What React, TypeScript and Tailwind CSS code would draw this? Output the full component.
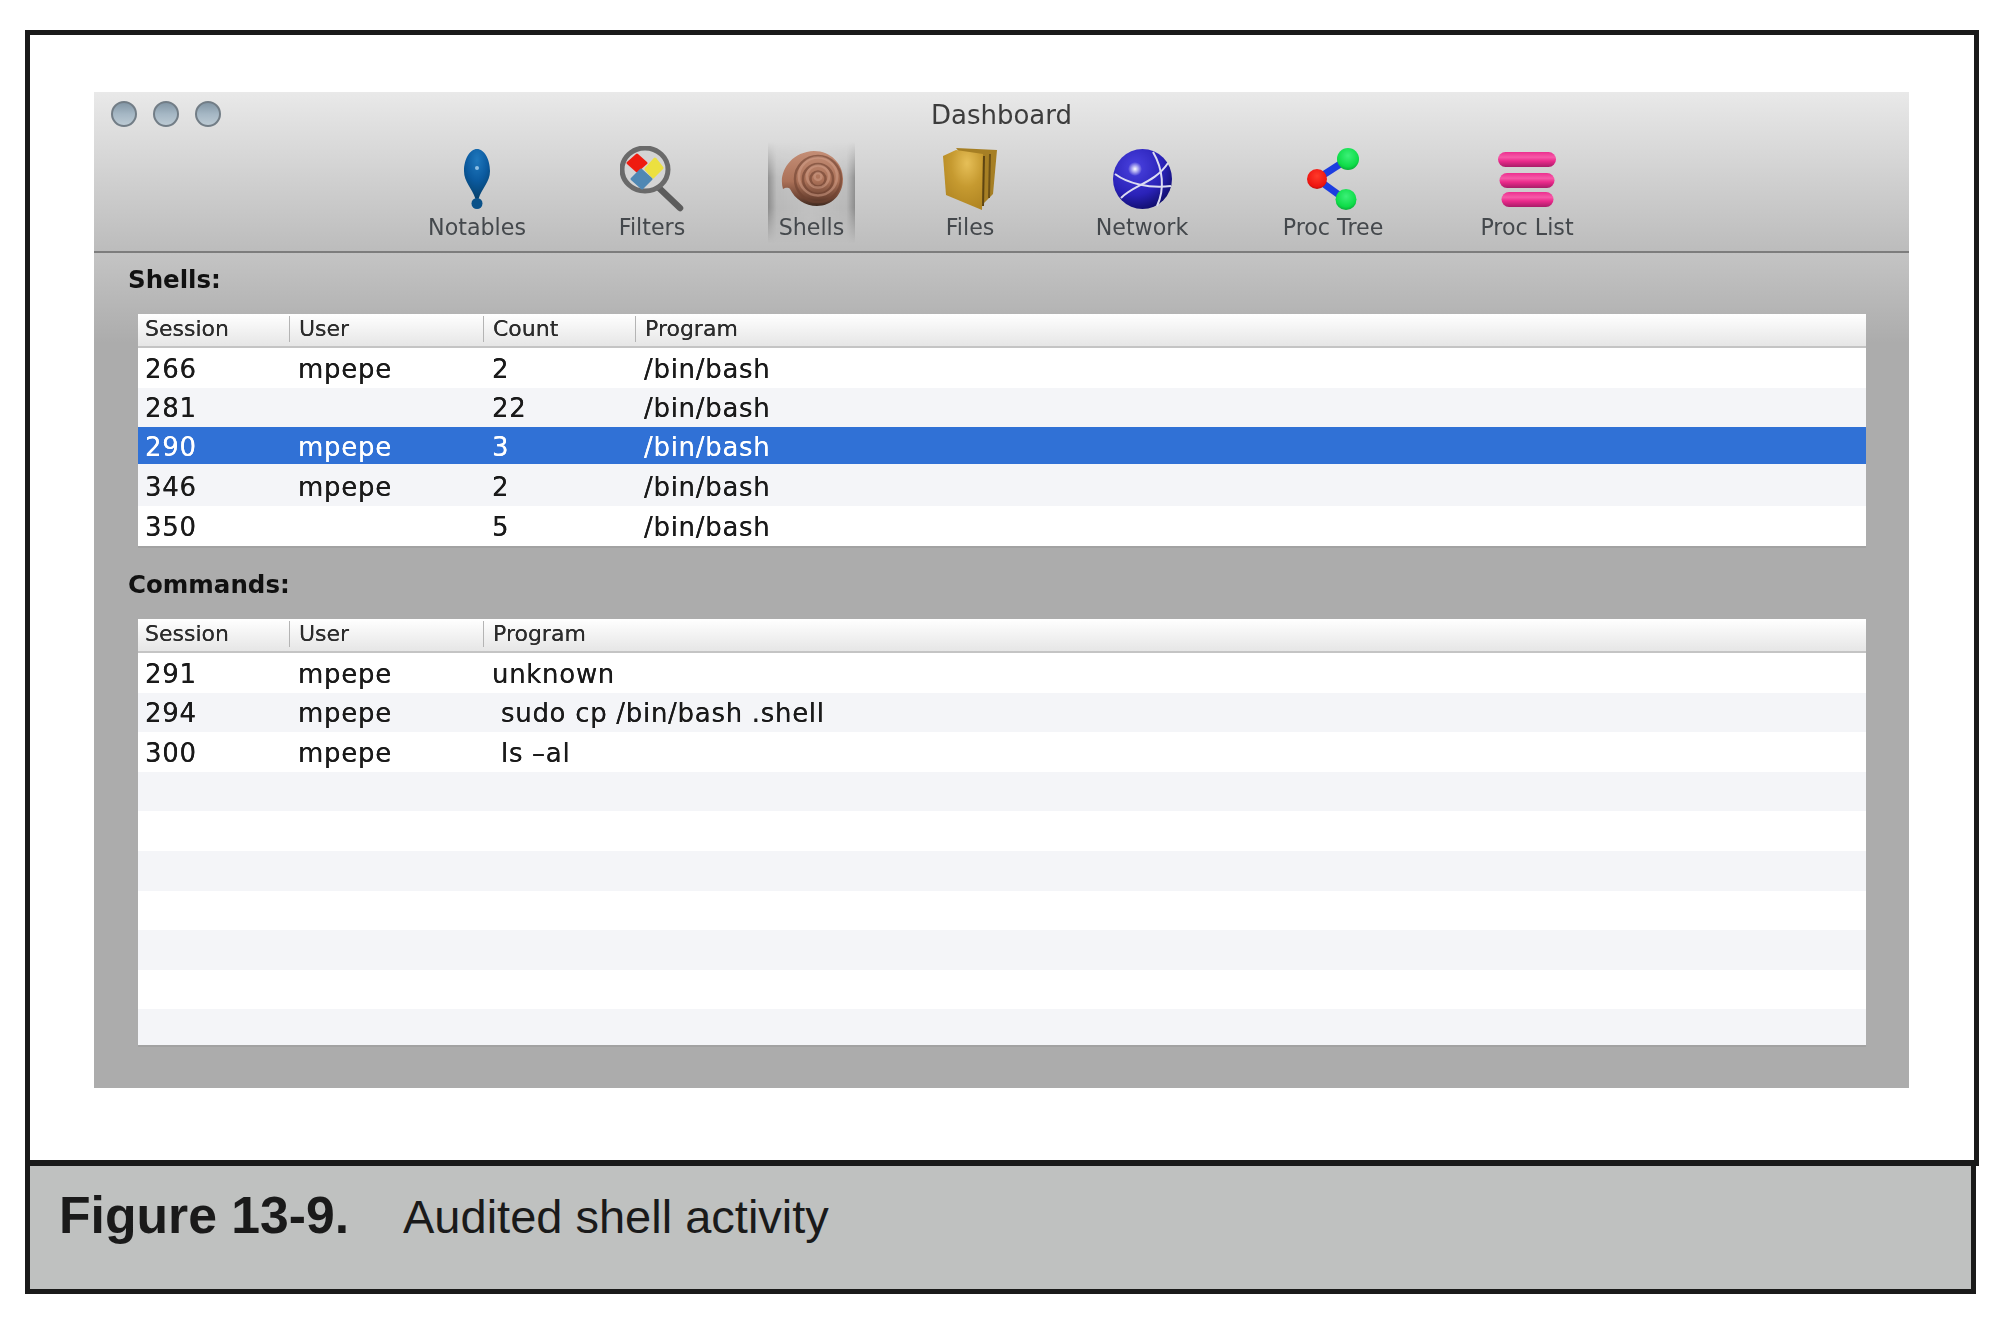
import type { ReactNode } from 'react'

const UI_FONT = "font-['DejaVu_Sans',sans-serif]"

function NotablesIcon() {
  return (
    <svg width="26" height="60" viewBox="0 0 26 60">
      <defs>
        <radialGradient id="drop" cx="0.5" cy="0.22" r="0.75">
          <stop offset="0" stopColor="#1f78bd" />
          <stop offset="0.55" stopColor="#0b5a9f" />
          <stop offset="1" stopColor="#06426f" />
        </radialGradient>
      </defs>
      <path d="M13 0C20 0 26 10 26 22C26 33 18 39 14.500 50H11.500C8 39 0 33 0 22C0 10 6 0 13 0Z" fill="url(#drop)" />
      <circle cx="13" cy="54.500" r="5.500" fill="#0b5289" />
      <circle cx="13" cy="19" r="2" fill="#8fc0e4" />
    </svg>
  )
}

function FiltersIcon() {
  return (
    <svg width="65" height="66" viewBox="0 0 65 66">
      <line x1="38" y1="41" x2="60" y2="62" stroke="#5c5c5c" strokeWidth="6.500" strokeLinecap="round" />
      <ellipse cx="25" cy="23.500" rx="23" ry="21.500" fill="#d4d4d4" stroke="#6a6a6a" strokeWidth="5" />
      <g strokeWidth="3" strokeLinejoin="round">
        <polygon points="17,9 26,17 17,25 8,17" fill="#ef1c10" stroke="#ef1c10" />
        <polygon points="35,13 42,22 33,31 26,23" fill="#ece040" stroke="#ece040" />
        <polygon points="21,24 31,33 22,42 12,33" fill="#4f88b4" stroke="#4f88b4" />
      </g>
    </svg>
  )
}

function ShellsIcon() {
  return (
    <svg width="62" height="56" viewBox="0 0 62 56">
      <defs>
        <linearGradient id="shell" x1="0.5" y1="0" x2="0.5" y2="1">
          <stop offset="0" stopColor="#c48e76" />
          <stop offset="0.55" stopColor="#ab7158" />
          <stop offset="0.85" stopColor="#6e4433" />
          <stop offset="1" stopColor="#3f2a20" />
        </linearGradient>
      </defs>
      <path d="M2 38C-3 22 9 1 33 0C50 0 62 13 62 28C62 44 50 55 36 55C24 55 14 48 9 38C7 36 4 37 2 38Z" fill="url(#shell)" />
      <g fill="none" strokeWidth="2.500">
        <g stroke="#6f4231" opacity="0.6">
          <ellipse cx="37" cy="28" rx="23" ry="23" />
          <ellipse cx="37" cy="28" rx="15" ry="15" />
          <ellipse cx="37" cy="28" rx="7.500" ry="7.500" />
        </g>
        <g stroke="#d2a08a" opacity="0.5">
          <ellipse cx="37" cy="25.500" rx="19" ry="19" />
          <ellipse cx="37" cy="25.500" rx="11" ry="11" />
          <ellipse cx="37" cy="25.500" rx="3.500" ry="3.500" />
        </g>
      </g>
    </svg>
  )
}

function FilesIcon() {
  return (
    <svg width="54" height="62" viewBox="0 0 54 62">
      <defs>
        <radialGradient id="folder" cx="0.6" cy="0.22" r="0.8">
          <stop offset="0" stopColor="#e6bf58" />
          <stop offset="0.5" stopColor="#c69a30" />
          <stop offset="1" stopColor="#b08522" />
        </radialGradient>
      </defs>
      <polygon points="13,0 54,2 50,46 40,56 30,20" fill="#a67f24" />
      <polygon points="0,8 13,2 40,6 39,62 3,47" fill="url(#folder)" />
      <line x1="41" y1="8" x2="40" y2="58" stroke="#5e4512" strokeWidth="2" />
      <line x1="47" y1="6" x2="46" y2="50" stroke="#6e5216" strokeWidth="2" />
    </svg>
  )
}

function NetworkIcon() {
  return (
    <svg width="59" height="60" viewBox="0 0 59 60">
      <defs>
        <radialGradient id="globe" cx="0.38" cy="0.3" r="0.78">
          <stop offset="0" stopColor="#4a42e0" />
          <stop offset="0.6" stopColor="#2a22b8" />
          <stop offset="1" stopColor="#0c0a60" />
        </radialGradient>
        <radialGradient id="glow">
          <stop offset="0" stopColor="#ffffff" />
          <stop offset="1" stopColor="#ffffff" stopOpacity="0" />
        </radialGradient>
      </defs>
      <ellipse cx="29.500" cy="30" rx="29.500" ry="30" fill="url(#globe)" />
      <g fill="none" stroke="#dcdcf2" strokeWidth="2">
        <path d="M2 25C14 34 36 40 58 37" />
        <path d="M8 49C20 36 42 34 55 14" />
        <path d="M40 3C50 20 52 40 44 57" />
      </g>
      <circle cx="22" cy="20" r="7" fill="url(#glow)" />
    </svg>
  )
}

function ProcTreeIcon() {
  return (
    <svg width="52" height="62" viewBox="0 0 52 62">
      <defs>
        <radialGradient id="nodeGreen" cx="0.5" cy="0.35" r="0.7">
          <stop offset="0" stopColor="#3cf078" />
          <stop offset="0.7" stopColor="#0edc48" />
          <stop offset="1" stopColor="#0a9c34" />
        </radialGradient>
        <radialGradient id="nodeRed" cx="0.5" cy="0.35" r="0.7">
          <stop offset="0" stopColor="#ff3a2a" />
          <stop offset="0.75" stopColor="#ee1410" />
          <stop offset="1" stopColor="#a80e0c" />
        </radialGradient>
      </defs>
      <g stroke="#1c3de0" strokeWidth="7">
        <line x1="10" y1="31" x2="41" y2="11" />
        <line x1="10" y1="31" x2="39" y2="52" />
      </g>
      <circle cx="41" cy="11" r="11" fill="url(#nodeGreen)" />
      <circle cx="39" cy="51.500" r="10.500" fill="url(#nodeGreen)" />
      <circle cx="10" cy="31" r="10" fill="url(#nodeRed)" />
    </svg>
  )
}

function ProcListIcon() {
  return (
    <svg width="59" height="55" viewBox="0 0 59 55">
      <defs>
        <linearGradient id="pill" x1="0" y1="0" x2="0" y2="1">
          <stop offset="0" stopColor="#ec2f8f" />
          <stop offset="0.35" stopColor="#f65aa8" />
          <stop offset="0.6" stopColor="#ec2a8c" />
          <stop offset="1" stopColor="#a81c68" />
        </linearGradient>
      </defs>
      <rect x="0" y="0" width="58" height="15" rx="7.500" fill="url(#pill)" />
      <rect x="1.500" y="21" width="55" height="15" rx="7.500" fill="url(#pill)" />
      <rect x="3.500" y="40" width="52" height="15" rx="7.500" fill="url(#pill)" />
    </svg>
  )
}

interface ToolItem {
  label: string
  icon: ReactNode
  box: string
  active?: boolean
}

const TOOLS: ToolItem[] = [
  { label: 'Notables', icon: <NotablesIcon />, box: 'w-[120px] ml-[323px]' },
  { label: 'Filters', icon: <FiltersIcon />, box: 'w-[100px] ml-[65px]' },
  { label: 'Shells', icon: <ShellsIcon />, box: 'w-[87px] ml-[66px]', active: true },
  { label: 'Files', icon: <FilesIcon />, box: 'w-[100px] ml-[65px]' },
  { label: 'Network', icon: <NetworkIcon />, box: 'w-[120px] ml-[62px]' },
  { label: 'Proc Tree', icon: <ProcTreeIcon />, box: 'w-[130px] ml-[66px]' },
  { label: 'Proc List', icon: <ProcListIcon />, box: 'w-[120px] ml-[69px]' },
]

function TrafficLight() {
  return (
    <div className="w-[26px] h-[26px] rounded-full border-2 border-[#727d86] bg-gradient-to-b from-[#8497a6] via-[#a5b7c4] to-[#bccad4]" />
  )
}

function Toolbar() {
  return (
    <div className={`h-[161px] border-b-2 border-[#7d7d7d] bg-gradient-to-b from-[#e9e9e9] to-[#bcbcbc] ${UI_FONT}`}>
      <div className="relative h-[50px] flex items-center pl-[17px] pb-[6px] gap-[16px]">
        <TrafficLight />
        <TrafficLight />
        <TrafficLight />
        <span className="absolute left-0 right-0 top-[10px] text-center text-[26px] leading-[26px] text-[#3c3c3c]">Dashboard</span>
      </div>
      <div className="flex">
        {TOOLS.map((t) => (
          <div key={t.label} className={`${t.box} relative h-[101px] flex flex-col items-center`}>
            {t.active && (
              <div className="absolute inset-0 bg-[linear-gradient(to_right,rgba(0,0,0,0.3),rgba(0,0,0,0.08)_10%,rgba(0,0,0,0.03)_50%,rgba(0,0,0,0.08)_90%,rgba(0,0,0,0.3))] [mask-image:linear-gradient(to_bottom,transparent,black_35%,black_65%,transparent)]" />
            )}
            <div className="relative h-[74px] flex items-center justify-center">{t.icon}</div>
            <div className="relative h-[22px] text-[22.200px] leading-[22px] text-[#44484c] whitespace-nowrap">{t.label}</div>
          </div>
        ))}
      </div>
    </div>
  )
}

interface Column {
  title: string
  width: string
}

function Table({ columns, rows, height, selected }: { columns: Column[]; rows: string[][]; height: string; selected?: number }) {
  return (
    <div className={`${height} bg-white overflow-hidden border-b-2 border-[#a2a2a2] ${UI_FONT}`}>
      <div className="h-[34px] flex bg-gradient-to-b from-white to-[#e6e6e6] border-b-2 border-[#c4c4c4]">
        {columns.map((c, i) => (
          <div
            key={c.title}
            className={`${c.width} h-[26px] mt-[2px] pl-[7px] text-[22px] leading-[26px] text-[#2c2c2c] [text-shadow:0_0_0.5px_#2c2c2c] ${
              i > 0 ? 'border-l border-[#b4b4b4] pl-[9px]' : ''
            }`}
          >
            {c.title}
          </div>
        ))}
      </div>
      {rows.map((r, i) => (
        <div
          key={i}
          className={`h-[39.6px] flex items-center text-[26px] tracking-[0.7px] [text-shadow:0_0_0.6px_currentColor] ${
            i === selected
              ? 'bg-[#3071d6] text-white border-b-[3px] border-[#f4f5f8] pt-[5px]'
              : i % 2 === 1
                ? 'bg-[#f4f5f8] text-[#1a1a1a] pt-[2.500px]'
                : 'bg-white text-[#1a1a1a] pt-[2.500px]'
          }`}
        >
          {columns.map((c, j) => (
            <div key={c.title} className={`${c.width} whitespace-pre pl-[7px] ${j > 0 ? 'pl-[9px]' : ''}`}>
              {r[j] ?? ''}
            </div>
          ))}
        </div>
      ))}
    </div>
  )
}

const SHELL_COLUMNS: Column[] = [
  { title: 'Session', width: 'w-[151px]' },
  { title: 'User', width: 'w-[194px]' },
  { title: 'Count', width: 'w-[152px]' },
  { title: 'Program', width: 'flex-1' },
]

const COMMAND_COLUMNS: Column[] = [
  { title: 'Session', width: 'w-[151px]' },
  { title: 'User', width: 'w-[194px]' },
  { title: 'Program', width: 'flex-1' },
]

const SHELL_ROWS = [
  ['266', 'mpepe', '2', '/bin/bash'],
  ['281', '', '22', '/bin/bash'],
  ['290', 'mpepe', '3', '/bin/bash'],
  ['346', 'mpepe', '2', '/bin/bash'],
  ['350', '', '5', '/bin/bash'],
]

const COMMAND_ROWS = [
  ['291', 'mpepe', 'unknown'],
  ['294', 'mpepe', ' sudo cp /bin/bash .shell'],
  ['300', 'mpepe', ' ls –al'],
  ['', '', ''],
  ['', '', ''],
  ['', '', ''],
  ['', '', ''],
  ['', '', ''],
  ['', '', ''],
  ['', '', ''],
]

function SectionLabel({ children }: { children: ReactNode }) {
  return <div className={`${UI_FONT} font-bold text-[24.500px] leading-[30px] text-[#111] pl-[34px]`}>{children}</div>
}

export default function App() {
  return (
    <div className="w-[2000px] h-[1330px] bg-white pt-[30px] pl-[25px] overflow-hidden">
      <div className="w-[1954px] h-[1136px] border-[5px] border-b-[6px] border-[#1a1a1a] pt-[57px] pl-[64px]">
        <div className="w-[1815px] h-[996px] bg-[#acacac] blur-[0.4px]">
          <Toolbar />
          <div className="h-[835px] bg-gradient-to-b from-[#c4c4c4] to-[#acacac] bg-[length:100%_90px] bg-no-repeat pt-[12px]">
            <SectionLabel>Shells:</SectionLabel>
            <div className="ml-[44px] mr-[43px] mt-[19px]">
              <Table columns={SHELL_COLUMNS} rows={SHELL_ROWS} height="h-[234px]" selected={2} />
            </div>
            <div className="mt-[22px]">
              <SectionLabel>Commands:</SectionLabel>
            </div>
            <div className="ml-[44px] mr-[43px] mt-[19px]">
              <Table columns={COMMAND_COLUMNS} rows={COMMAND_ROWS} height="h-[428px]" />
            </div>
          </div>
        </div>
      </div>
      <div className="w-[1951px] h-[128px] bg-[#bfc1c0] border-[5px] border-t-0 border-[#1a1a1a] pl-[29px] pt-[19px] flex items-baseline font-['Liberation_Sans',sans-serif] text-[#1a1a1a]">
        <span className="w-[344px] font-bold text-[51.700px] leading-[60px]">Figure 13-9.</span>
        <span className="text-[47px] leading-[60px]">Audited shell activity</span>
      </div>
    </div>
  )
}
